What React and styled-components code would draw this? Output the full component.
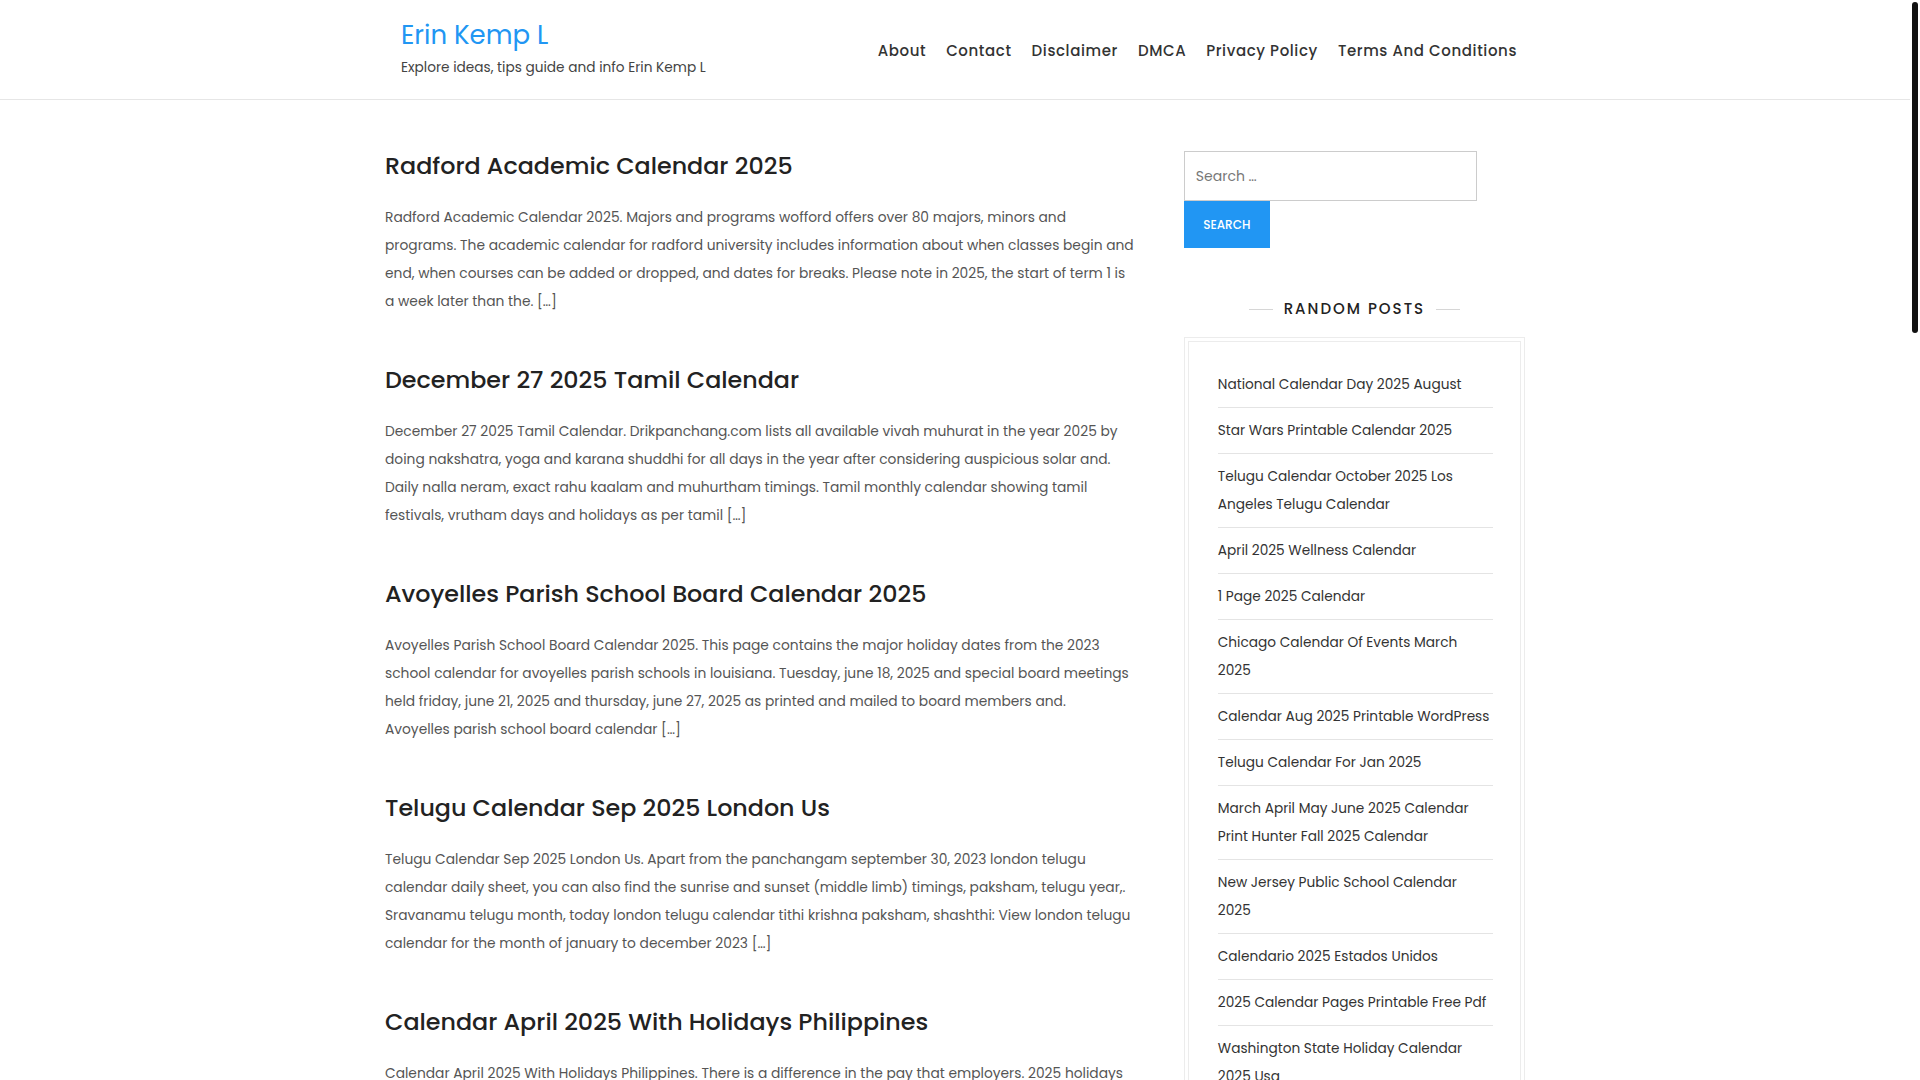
import React from "react";
import styled, { createGlobalStyle } from "styled-components";

const GlobalStyle = createGlobalStyle`
    body {
        margin: 0;
        background: #fff;
        font-family: "Poppins", Inter, "Noto Sans", sans-serif;
        color: #333;
    }
    * { box-sizing: border-box; }
`;

const Page = styled.div`
    margin-right: 10px;
`;

const ScrollThumb = styled.div`
    position: fixed;
    top: 2px;
    right: 2px;
    width: 6px;
    height: 331px;
    border-radius: 3px;
    background: #111;
`;

const Header = styled.header`
    height: 100px;
    border-bottom: 1px solid #e6e6e6;
`;

const HeaderInner = styled.div`
    width: 1140px;
    height: 100%;
    margin: 0 auto;
    padding: 0 8px 0 16px;
    display: flex;
    justify-content: space-between;
    align-items: center;
`;

const Branding = styled.div`
    align-self: flex-start;
    padding-top: 17px;

    h1 {
        margin: 0;
        font-size: 26px;
        line-height: 36px;
        font-weight: 400;
        color: #2196f3;
    }

    p {
        margin: 3px 0 0;
        font-size: 13.7px;
        line-height: 24px;
        color: #444;
    }
`;

const Nav = styled.nav`
    display: flex;
    gap: 20px;
    padding-top: 1px;

    a {
        font-size: 15px;
        font-weight: 500;
        letter-spacing: 0.6px;
        color: #333;
        text-decoration: none;
    }
`;

const Container = styled.div`
    width: 1140px;
    margin: 0 auto;
    padding-top: 48px;
    display: flex;
    gap: 50px;
`;

const Primary = styled.main`
    width: 748.8px;
    flex-shrink: 0;
`;

const Article = styled.article`
    margin-bottom: 46px;

    h2 {
        margin: 0 0 20px;
        font-size: 23.8px;
        line-height: 36px;
        font-weight: 500;
        color: #222;
    }

    p {
        margin: 0;
        font-size: 13.8px;
        line-height: 28px;
        color: #555;
    }
`;

const Sidebar = styled.aside`
    width: 342px;
    padding-top: 3px;
`;

const SearchForm = styled.form`
    display: flex;
    flex-direction: column;
    align-items: flex-start;
`;

const SearchInput = styled.input`
    width: 293px;
    height: 50px;
    border: 1px solid #ccc;
    padding: 0 11px;
    font-family: inherit;
    font-size: 14px;
    color: #555;
    outline: none;

    &::placeholder { color: #777; }
`;

const SearchButton = styled.button`
    width: 86px;
    height: 47px;
    border: none;
    background: #2196f3;
    color: #fff;
    font-family: inherit;
    font-size: 12px;
    font-weight: 500;
    text-transform: uppercase;
`;

const WidgetTitle = styled.h3`
    margin: 49px 0 16px;
    display: flex;
    align-items: center;
    justify-content: center;
    gap: 11px;
    font-size: 15px;
    line-height: 24px;
    font-weight: 500;
    letter-spacing: 2px;
    color: #222;

    &::before, &::after {
        content: "";
        width: 24px;
        height: 1px;
        background: #d6d6d6;
    }
`;

const WidgetBox = styled.div`
    border: 1px solid #ececec;
    padding: 3px;
`;

const WidgetInner = styled.div`
    border: 1px solid #ececec;
    padding: 20px 27px 20px 29px;
`;

const PostList = styled.ul`
    list-style: none;
    margin: 0;
    padding: 0;
`;

const PostItem = styled.li`
    padding: 9px 0 8px;
    border-bottom: 1px solid #e4e4e4;
    font-size: 13.7px;
    line-height: 28px;
    color: #333;

    &:last-child { border-bottom: none; }
`;

const posts = [
    {
        title: "Radford Academic Calendar 2025",
        text: "Radford Academic Calendar 2025. Majors and programs wofford offers over 80 majors, minors and programs. The academic calendar for radford university includes information about when classes begin and end, when courses can be added or dropped, and dates for breaks. Please note in 2025, the start of term 1 is a week later than the. […]",
    },
    {
        title: "December 27 2025 Tamil Calendar",
        text: "December 27 2025 Tamil Calendar. Drikpanchang.com lists all available vivah muhurat in the year 2025 by doing nakshatra, yoga and karana shuddhi for all days in the year after considering auspicious solar and. Daily nalla neram, exact rahu kaalam and muhurtham timings. Tamil monthly calendar showing tamil festivals, vrutham days and holidays as per tamil […]",
    },
    {
        title: "Avoyelles Parish School Board Calendar 2025",
        text: "Avoyelles Parish School Board Calendar 2025. This page contains the major holiday dates from the 2023 school calendar for avoyelles parish schools in louisiana. Tuesday, june 18, 2025 and special board meetings held friday, june 21, 2025 and thursday, june 27, 2025 as printed and mailed to board members and. Avoyelles parish school board calendar […]",
    },
    {
        title: "Telugu Calendar Sep 2025 London Us",
        text: "Telugu Calendar Sep 2025 London Us. Apart from the panchangam september 30, 2023 london telugu calendar daily sheet, you can also find the sunrise and sunset (middle limb) timings, paksham, telugu year,. Sravanamu telugu month, today london telugu calendar tithi krishna paksham, shashthi: View london telugu calendar for the month of january to december 2023 […]",
    },
    {
        title: "Calendar April 2025 With Holidays Philippines",
        text: "Calendar April 2025 With Holidays Philippines. There is a difference in the pay that employers. 2025 holidays in the philippines include regular holidays and special non-working days declared by the government. […]",
    },
];

const randomPosts = [
    "National Calendar Day 2025 August",
    "Star Wars Printable Calendar 2025",
    "Telugu Calendar October 2025 Los Angeles Telugu Calendar",
    "April 2025 Wellness Calendar",
    "1 Page 2025 Calendar",
    "Chicago Calendar Of Events March 2025",
    "Calendar Aug 2025 Printable WordPress",
    "Telugu Calendar For Jan 2025",
    "March April May June 2025 Calendar Print Hunter Fall 2025 Calendar",
    "New Jersey Public School Calendar 2025",
    "Calendario 2025 Estados Unidos",
    "2025 Calendar Pages Printable Free Pdf",
    "Washington State Holiday Calendar 2025 Usa",
];

const navLinks = ["About", "Contact", "Disclaimer", "DMCA", "Privacy Policy", "Terms And Conditions"];

export default function App() {
    return (
        <Page>
            <GlobalStyle />
            <ScrollThumb />
            <Header>
                <HeaderInner>
                    <Branding>
                        <h1>Erin Kemp L</h1>
                        <p>Explore ideas, tips guide and info Erin Kemp L</p>
                    </Branding>
                    <Nav>
                        {navLinks.map((link) => <a href="#" key={link}>{link}</a>)}
                    </Nav>
                </HeaderInner>
            </Header>
            <Container>
                <Primary>
                    {posts.map((post) =>
                        <Article key={post.title}>
                            <h2>{post.title}</h2>
                            <p>{post.text}</p>
                        </Article>
                    )}
                </Primary>
                <Sidebar>
                    <SearchForm onSubmit={(e) => e.preventDefault()}>
                        <SearchInput placeholder="Search …" />
                        <SearchButton>Search</SearchButton>
                    </SearchForm>
                    <WidgetTitle>RANDOM POSTS</WidgetTitle>
                    <WidgetBox>
                        <WidgetInner>
                            <PostList>
                                {randomPosts.map((item) => <PostItem key={item}>{item}</PostItem>)}
                            </PostList>
                        </WidgetInner>
                    </WidgetBox>
                </Sidebar>
            </Container>
        </Page>
    );
}
